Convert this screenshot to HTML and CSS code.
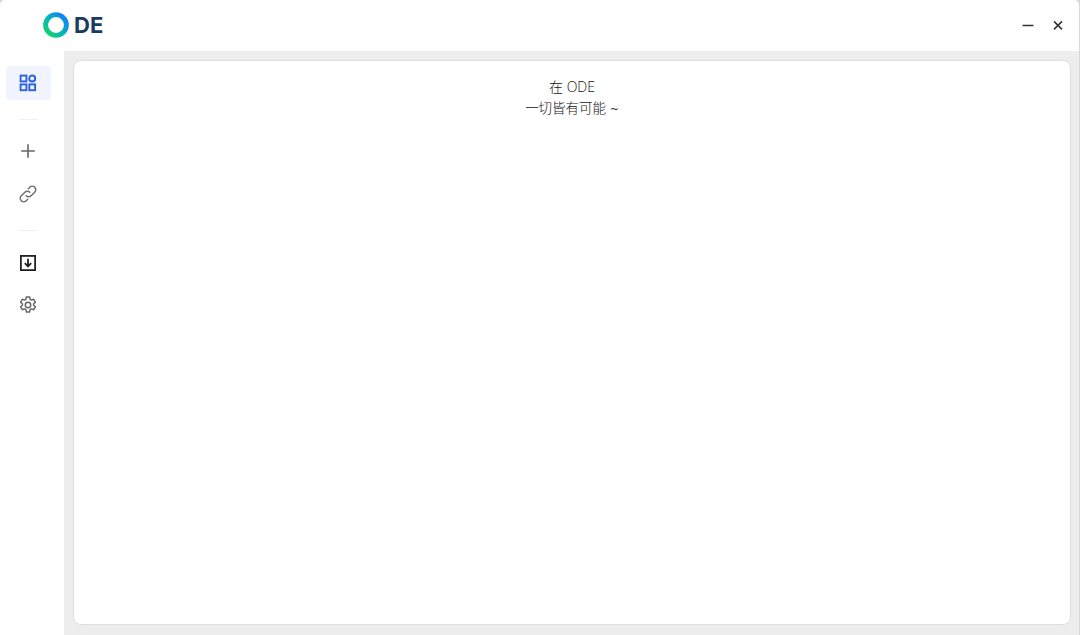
FILE: index.html
```html
<!DOCTYPE html>
<html lang="zh">
<head>
<meta charset="utf-8">
<title>ODE</title>
<link rel="stylesheet" href="styles.css">
</head>
<body>
<div class="app">
  <header class="titlebar">
    <div class="logo">
      <svg class="logo-ring" viewBox="0 0 26 26" width="26" height="26">
        <defs>
          <linearGradient id="ring" x1="0.1" y1="0.9" x2="0.9" y2="0.1">
            <stop offset="0" stop-color="#12d070"/>
            <stop offset="0.4" stop-color="#08bcae"/>
            <stop offset="1" stop-color="#1083f5"/>
          </linearGradient>
        </defs>
        <circle cx="13" cy="13" r="10.4" fill="none" stroke="url(#ring)" stroke-width="4.9"/>
      </svg>
      <span class="logo-text">DE</span>
    </div>
    <div class="window-controls">
      <button class="win-btn" aria-label="最小化">
        <svg viewBox="0 0 12 12" width="12" height="12"><path d="M0.5 6.5h11" stroke="#333" stroke-width="1.5" fill="none"/></svg>
      </button>
      <button class="win-btn" aria-label="关闭">
        <svg viewBox="0 0 12 12" width="12" height="12"><path d="M2 2.4l8 8M10 2.4l-8 8" stroke="#333" stroke-width="1.5" fill="none"/></svg>
      </button>
    </div>
  </header>
  <div class="body-row">
    <nav class="sidebar">
      <a class="nav-item active">
        <svg viewBox="0 0 18 18" width="18" height="18" fill="none" stroke="#2b62e3" stroke-width="1.9">
          <rect x="1.6" y="1.6" width="5.8" height="5.8"/>
          <circle cx="13.2" cy="4.5" r="3"/>
          <rect x="1.6" y="10.4" width="5.8" height="5.8"/>
          <rect x="10.3" y="10.4" width="5.8" height="5.8"/>
        </svg>
      </a>
      <div class="divider first"></div>
      <a class="nav-item">
        <svg viewBox="0 0 18 18" width="18" height="18" fill="none" stroke="#666" stroke-width="1.6"><path d="M9 2.2v13.6M2.2 9h13.6"/></svg>
      </a>
      <a class="nav-item link">
        <svg viewBox="0 0 18 18" width="18" height="18" fill="none" stroke="#6e6e6e" stroke-width="1.5" stroke-linecap="round"><path d="M7.2 10.8a3.4 3.4 0 0 0 4.9 0l3.6-3.6a3.4 3.4 0 0 0-4.9-4.9L9.3 3.8"/><path d="M10.8 7.2a3.4 3.4 0 0 0-4.9 0l-3.6 3.6a3.4 3.4 0 0 0 4.9 4.9l1.5-1.5"/></svg>
      </a>
      <div class="divider second"></div>
      <a class="nav-item download">
        <svg viewBox="0 0 18 18" width="18" height="18" fill="none" stroke="#222" stroke-width="1.8"><rect x="1.9" y="1.9" width="14.2" height="14.2"/><path d="M9 4.8v7.6M5.8 9.1L9 12.4l3.2-3.3"/></svg>
      </a>
      <a class="nav-item gear">
        <svg viewBox="0 0 18 18" width="18" height="18" fill="none" stroke="#666" stroke-width="1.5" stroke-linejoin="round"><path d="M7.4 1h3.2l.5 2.4 1.3.7 2.3-.8 1.7 2.9-1.8 1.6v1.4l1.8 1.6-1.7 2.9-2.3-.8-1.3.7-.5 2.4H7.4l-.5-2.4-1.3-.7-2.3.8-1.7-2.9 1.8-1.6V7.8L1.6 6.2l1.7-2.9 2.3.8 1.3-.7z"/><circle cx="9" cy="9" r="2.7"/></svg>
      </a>
    </nav>
    <main class="content">
      <section class="card">
        <p class="line">在 ODE</p>
        <p class="line second-line">一切皆有可能 <span class="tilde">~</span></p>
      </section>
    </main>
  </div>
</div>
</body>
</html>
```
FILE: styles.css
```css
* { box-sizing: border-box; }
html, body { margin: 0; height: 100%; }
body {
  background: #d6d9dc;
  font-family: "Open Sans", "Noto Sans CJK SC", sans-serif;
  overflow: hidden;
}
.app {
  width: 1079px;
  height: 635px;
  display: flex;
  flex-direction: column;
  background: #fff;
  border-radius: 5px 5px 0 0;
  overflow: hidden;
}
.titlebar {
  height: 51px;
  flex: none;
  display: flex;
  align-items: center;
  justify-content: space-between;
  padding: 0 6px 2px 43px;
}
.logo { display: flex; align-items: center; gap: 5px; }
.logo-ring { display: block; }
.logo-text {
  font-family: "Inter", "Liberation Sans", sans-serif;
  font-weight: 700;
  font-size: 22px;
  line-height: 26px;
  color: #1d3a60;
}
.window-controls { display: flex; }
.win-btn {
  width: 30px;
  height: 30px;
  padding: 0;
  border: 0;
  background: none;
  display: flex;
  align-items: center;
  justify-content: center;
}
.body-row { flex: 1; display: flex; min-height: 0; }
.sidebar {
  width: 64px;
  flex: none;
  padding: 15px 13px 0 6px;
  display: flex;
  flex-direction: column;
}
.nav-item {
  height: 34px;
  flex: none;
  border-radius: 4px;
  padding-right: 1px;
  display: flex;
  align-items: center;
  justify-content: center;
}
.nav-item.active { background: #f1f3fe; }
.divider { height: 1px; background: #f0f0f0; margin: 0 13px; flex: none; }
.divider.first { margin-top: 19px; margin-bottom: 14px; }
.nav-item.link { margin-top: 9px; }
.divider.second { margin-top: 19px; margin-bottom: 15px; }
.nav-item.gear { margin-top: 8px; }
.content {
  flex: 1;
  background: #ededed;
  padding: 9px 8px 10px 9px;
  min-width: 0;
}
.card {
  height: 100%;
  background: #fff;
  border: 1px solid #dedede;
  border-radius: 8px;
  padding: 15px 0 0;
  text-align: center;
  color: #111;
  font-size: 14px;
  font-weight: 300;
  line-height: 21px;
}
.line { margin: 0; }
.second-line { font-size: 13.5px; margin-top: 1px; }
.tilde { font-family: "DejaVu Sans", sans-serif; font-size: 11px; font-weight: 400; color: #333; }
```
